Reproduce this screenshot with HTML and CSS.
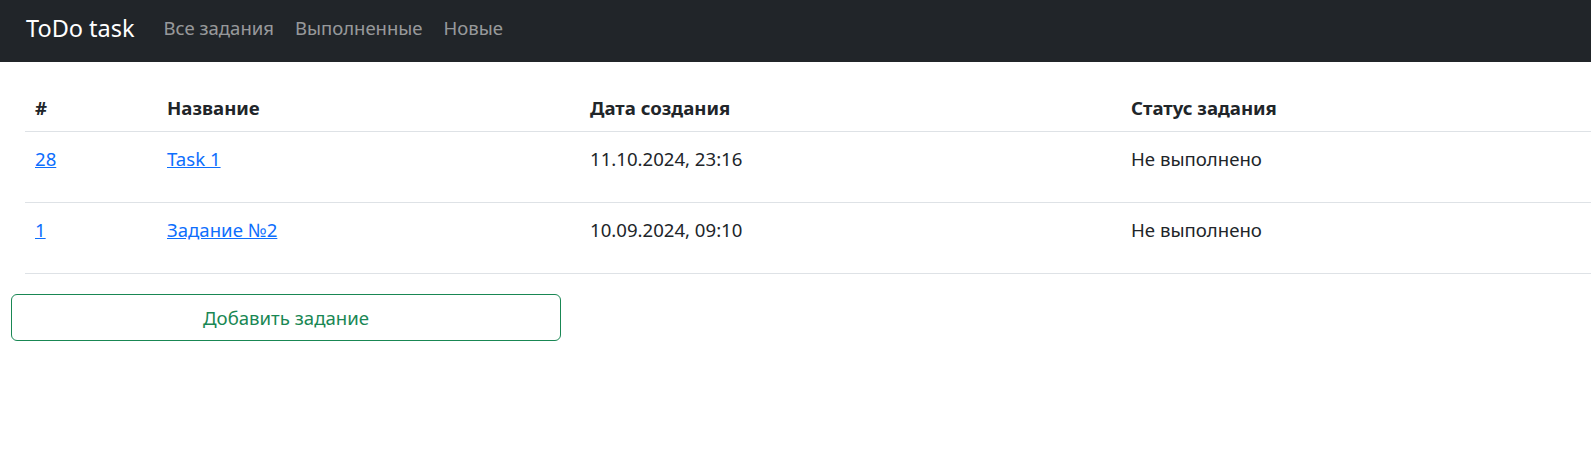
FILE: index.html
```html
<!DOCTYPE html>
<html lang="ru">
<head>
<meta charset="utf-8">
<title>ToDo task</title>
<link rel="stylesheet" href="styles.css">
</head>
<body>
<nav class="navbar">
  <a class="brand" href="#">ToDo task</a>
  <ul class="nav">
    <li><a class="nav-link" href="#">Все задания</a></li>
    <li><a class="nav-link" href="#">Выполненные</a></li>
    <li><a class="nav-link" href="#">Новые</a></li>
  </ul>
</nav>
<main class="content">
  <table class="tasks">
    <thead>
      <tr>
        <th class="c-id">#</th>
        <th class="c-name">Название</th>
        <th class="c-date">Дата создания</th>
        <th class="c-status">Статус задания</th>
      </tr>
    </thead>
    <tbody>
      <tr>
        <td><a href="#">28</a></td>
        <td><a href="#">Task 1</a></td>
        <td>11.10.2024, 23:16</td>
        <td>Не выполнено</td>
      </tr>
      <tr>
        <td><a href="#">1</a></td>
        <td><a href="#">Задание №2</a></td>
        <td>10.09.2024, 09:10</td>
        <td>Не выполнено</td>
      </tr>
    </tbody>
  </table>
  <div class="actions">
    <button class="btn-add" type="button">Добавить задание</button>
  </div>
</main>
</body>
</html>
```
FILE: styles.css
```css
* { box-sizing: border-box; }
html, body { margin: 0; padding: 0; }
body {
  font-family: "Noto Sans", "Open Sans", sans-serif;
  font-size: 18.6px;
  line-height: 27px;
  color: #212529;
  background: #fff;
}
.navbar {
  height: 62px;
  background: #212529;
  display: flex;
  align-items: center;
  padding-left: 26px;
  padding-bottom: 7px;
}
.brand {
  color: #fff;
  text-decoration: none;
  font-size: 23.5px;
  line-height: 30px;
  margin-right: 29px;
}
.nav {
  list-style: none;
  display: flex;
  margin: 0;
  padding: 0;
  gap: 21px;
}
.nav-link {
  color: rgba(255, 255, 255, 0.55);
  text-decoration: none;
  font-size: 18.5px;
}
.content {
  padding-top: 24px;
}
.tasks {
  margin-left: 25px;
  width: calc(100% - 25px);
  border-collapse: collapse;
  table-layout: fixed;
}
.tasks th {
  text-align: left;
  font-weight: 700;
  padding: 8px 10px 10px;
  border-bottom: 1px solid #dee2e6;
}
.tasks td {
  padding: 13px 10px 0;
  height: 71px;
  vertical-align: top;
  border-bottom: 1px solid #dee2e6;
}
.c-id { width: 132px; }
.c-name { width: 423px; }
.c-date { width: 541px; }
.tasks a { color: #0d6efd; text-decoration: underline; }
.actions {
  padding: 20px 0 0 11px;
}
.btn-add {
  width: 550px;
  height: 47px;
  background: #fff;
  color: #198754;
  border: 1px solid #198754;
  border-radius: 6px;
  font-family: inherit;
  font-size: 18.6px;
}
```
